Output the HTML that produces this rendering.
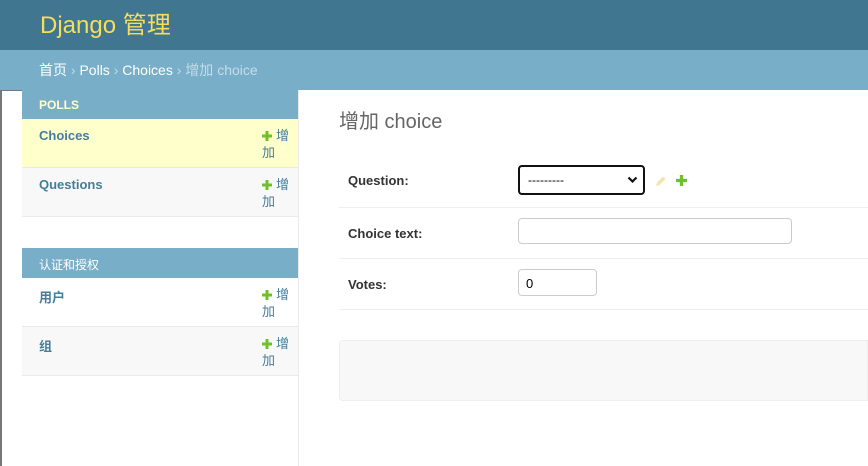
<!DOCTYPE html>
<html><head><meta charset="utf-8"><style>
*{box-sizing:border-box}
body{margin:0;width:868px;height:466px;overflow:hidden;background:#fff;font-family:"Liberation Sans","Noto Sans CJK SC",sans-serif;font-size:13px;color:#333;position:relative}
#hdr{height:50px;background:#417690;color:#f5dd5d;font-size:24px;padding:11px 0 0 40px;line-height:30px}
#bc{height:40px;background:#79aec8;color:#c4dce8;font-size:14px;padding:11px 0 0 39px;line-height:18px}
#bc b{color:#fff;font-weight:normal}
#toggle{position:absolute;left:0;top:90px;width:2px;height:376px;background:#777}
#toggle2{position:absolute;left:0;top:90px;width:22px;height:1px;background:#777}
#side{position:absolute;left:22px;top:90px;width:277px;height:376px;border-right:1px solid #eaeaea}
.cap{background:#79aec8;color:#fff;font-size:12px;padding:8px 17px;height:29px}
.cap.p{color:#ffc;font-weight:bold}
.row{height:49px;border-bottom:1px solid #eaeaea;position:relative;padding:9px 17px;font-weight:bold;color:#447e9b}
.row.y{background:#ffc}.row.g{background:#f8f8f8}
.add{position:absolute;left:240px;top:8px;width:36px;font-weight:normal;color:#447e9b;line-height:17px;font-size:13px}
.add svg{vertical-align:-1px;margin-right:4px}
#main{position:absolute;left:339px;top:90px;right:0;height:376px}
h1{position:absolute;top:20px;left:0;margin:0;font-size:20px;color:#666;font-weight:normal;line-height:24px}
.f{position:absolute;left:0;right:0;border-bottom:1px solid #eee;font-weight:bold;color:#333}
.f label{position:absolute;left:9px}
</style></head><body>
<div id="hdr">Django 管理</div>
<div id="bc"><b>首页</b> › <b>Polls</b> › <b>Choices</b> › 增加 choice</div>
<div id="toggle"></div><div id="toggle2"></div>
<div id="side">
<div class="cap p">POLLS</div>
<div class="row y">Choices<div class="add"><svg width="10" height="10" viewBox="0 0 10 10"><path d="M3.5 0h3v3.5H10v3H6.5V10h-3V6.5H0v-3h3.5z" fill="#70bf2b"/></svg>增加</div></div>
<div class="row g">Questions<div class="add"><svg width="10" height="10" viewBox="0 0 10 10"><path d="M3.5 0h3v3.5H10v3H6.5V10h-3V6.5H0v-3h3.5z" fill="#70bf2b"/></svg>增加</div></div>
<div style="height:31px"></div>
<div class="cap" style="height:30px">认证和授权</div>
<div class="row">用户<div class="add"><svg width="10" height="10" viewBox="0 0 10 10"><path d="M3.5 0h3v3.5H10v3H6.5V10h-3V6.5H0v-3h3.5z" fill="#70bf2b"/></svg>增加</div></div>
<div class="row g">组<div class="add"><svg width="10" height="10" viewBox="0 0 10 10"><path d="M3.5 0h3v3.5H10v3H6.5V10h-3V6.5H0v-3h3.5z" fill="#70bf2b"/></svg>增加</div></div>
</div>
<div id="main">
<h1>增加 choice</h1>
<div class="f" style="top:67px;height:51px"><label style="top:16px">Question:</label>
<div style="position:absolute;left:179px;top:8px;width:127px;height:30px;border:2px solid #111;border-radius:4px;font-weight:normal;font-size:12px;padding:6px 8px;color:#000">---------
<svg style="position:absolute;right:5px;top:9px" width="11" height="8" viewBox="0 0 11 8"><path d="M1.5 1.5l4 4 4-4" stroke="#111" stroke-width="2.2" fill="none"/></svg></div>
<svg style="position:absolute;left:316px;top:18px" width="12" height="12" viewBox="0 0 12 12"><path d="M1 11l1-3.5 6-6 2.5 2.5-6 6z" fill="#f5e4a8"/></svg>
<svg style="position:absolute;left:337px;top:18px" width="11" height="11" viewBox="0 0 10 10"><path d="M3.5 0h3v3.5H10v3H6.5V10h-3V6.5H0v-3h3.5z" fill="#70bf2b"/></svg>
</div>
<div class="f" style="top:118px;height:51px"><label style="top:18px">Choice text:</label>
<div style="position:absolute;left:179px;top:10px;width:274px;height:26px;border:1px solid #ccc;border-radius:4px"></div></div>
<div class="f" style="top:169px;height:51px"><label style="top:18px">Votes:</label>
<div style="position:absolute;left:179px;top:10px;width:79px;height:27px;border:1px solid #ccc;border-radius:4px;font-weight:normal;padding:6px 7px;color:#000">0</div></div>
<div style="position:absolute;left:0;right:0;top:250px;height:61px;background:#f8f8f8;border:1px solid #eee;border-radius:4px 0 0 4px"></div>
</div>
</body></html>
